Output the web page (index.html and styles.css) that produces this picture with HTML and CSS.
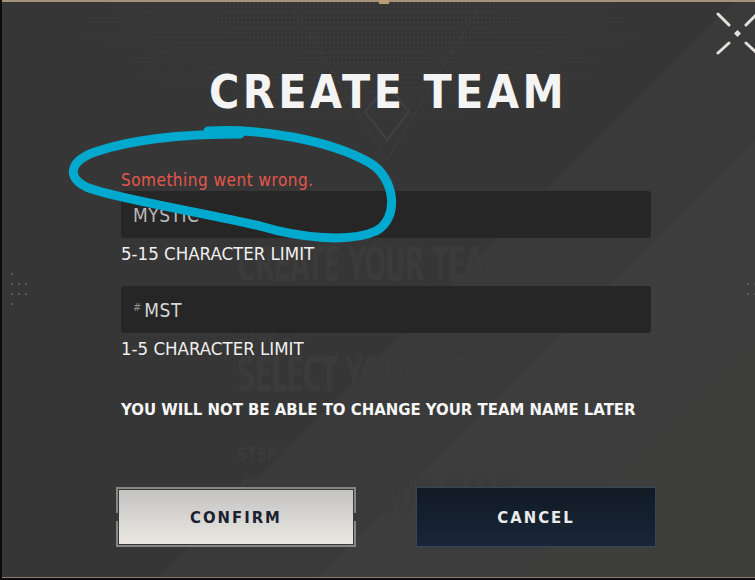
FILE: index.html
```html
<!DOCTYPE html>
<html lang="en">
<head>
    <meta charset="UTF-8">
    <title>Create Team</title>
    <link rel="stylesheet" href="styles.css">
</head>
<body>
    <div class="modal">
        <div class="sheen"></div>
        <div class="texture"></div>

        <div class="ghost">
            <div class="ghost-title g1">CREATE YOUR TEAM</div>
            <div class="ghost-step g2">STEP 2</div>
            <div class="ghost-title g3">SELECT YOUR ZONE</div>
            <div class="ghost-step g4">STEP 3</div>
            <div class="ghost-title g5">CHOOSE YOUR GAME</div>
        </div>

        <svg class="deco" width="755" height="200" viewBox="0 0 755 200">
            <path d="M286 0 L385 160 L481 0" fill="none" stroke="#3f3f3f" stroke-width="1"/>
            <path d="M385 84 L407 112 L385 140 L363 112 Z" fill="none" stroke="#444140" stroke-width="2"/>
        </svg>

        <div class="dots dots-left">
            <span></span><span class="off"></span><span class="off"></span>
            <span></span><span></span><span></span>
            <span></span><span></span><span></span>
            <span></span><span class="off"></span><span class="off"></span>
        </div>
        <div class="dots dots-right">
            <span></span><span></span>
            <span></span><span></span>
        </div>

        <div class="top-line"><span class="notch"></span></div>

        <button class="close" aria-label="Close">
            <svg width="46" height="50" viewBox="0 0 46 50">
                <path d="M6 5 L17 16 M34 16 L45 5 M6 44 L17 34 M34 34 L45 44" stroke="#e4e0da" stroke-width="3" stroke-linecap="round"/>
                <path d="M25.5 21 L29 24.5 L25.5 28 L22 24.5 Z" fill="#e4e0da"/>
            </svg>
        </button>

        <div class="content">
            <h1 class="title">CREATE TEAM</h1>

            <div class="error">Something went wrong.</div>
            <div class="field">
                <span class="value">MYSTIC</span>
            </div>
            <div class="hint">5-15 CHARACTER LIMIT</div>

            <div class="field field-tag">
                <span class="hash">#</span><span class="value">MST</span>
            </div>
            <div class="hint">1-5 CHARACTER LIMIT</div>

            <div class="warning">YOU WILL NOT BE ABLE TO CHANGE YOUR TEAM NAME LATER</div>

            <div class="actions">
                <div class="confirm-frame">
                    <button class="button confirm">CONFIRM</button>
                </div>
                <button class="button cancel">CANCEL</button>
            </div>
        </div>

        <svg class="scribble" width="755" height="580" viewBox="0 0 755 580">
            <path d="M208 131 C260 128 330 140 370 163 C395 178 400 218 376 231 C350 243 300 238 260 226 C200 212 130 201 95 190 C66 182 66 162 95 152 C130 140 180 134 240 134"
                  fill="none" stroke="#00a9cd" stroke-width="9" stroke-linecap="round" stroke-linejoin="round"/>
        </svg>

        <div class="bottom-line"></div>
    </div>
</body>
</html>
```

FILE: styles.css
```css
body {
    margin: 0;
    background-color: #000;
    font-family: "DejaVu Sans Condensed", "Liberation Sans Narrow", "Liberation Sans", sans-serif;
}
.modal {
    position: relative;
    width: 755px;
    height: 580px;
    background-color: #383838;
    overflow: hidden;
    border-left: 2px solid #0c0c0c;
    box-sizing: border-box;
}
.sheen {
    position: absolute;
    top: 0;
    right: 0;
    bottom: 0;
    left: 0;
    background: linear-gradient(135deg,
        rgba(0, 0, 0, 0.03) 0 55%,
        rgba(255, 255, 255, 0.012) 55% 67%,
        rgba(255, 255, 255, 0.028) 67% 82%,
        rgba(255, 240, 220, 0.032) 82%);
}
.texture {
    position: absolute;
    left: 30px;
    top: 0;
    width: 660px;
    height: 140px;
    background-image: radial-gradient(circle, #3f3f3f 0.8px, transparent 1.2px);
    background-size: 4px 5px;
    -webkit-mask-image: radial-gradient(ellipse 50% 100% at 50% 0, #000 40%, transparent);
    mask-image: radial-gradient(ellipse 50% 100% at 50% 0, #000 40%, transparent);
}
.deco {
    position: absolute;
    left: 0;
    top: 0;
}

/* faint copy of the page behind the dialog */
.ghost {
    position: absolute;
    left: 235px;
    top: 240px;
    display: flex;
    flex-direction: column;
    align-items: flex-start;
    color: #3b3b3b;
    font-weight: bold;
    line-height: 1;
}
.ghost-title {
    font-size: 48px;
    letter-spacing: -2px;
    transform: scaleX(0.6);
    transform-origin: left;
    white-space: nowrap;
}
.ghost-step {
    font-size: 20px;
    transform: scaleX(0.8);
    transform-origin: left;
}
.g1 { margin-bottom: 36px; }
.g2 { margin-bottom: 6px; }
.g3 { margin-bottom: 46px; }
.g4 { margin-bottom: 8px; }

.dots {
    position: absolute;
    display: grid;
    gap: 8px 5px;
}
.dots span {
    width: 2px;
    height: 2px;
    background-color: #5a5a5a;
}
.dots span.off {
    background: none;
}
.dots-left {
    left: 9px;
    top: 273px;
    grid-template-columns: repeat(3, 2px);
}
.dots-right {
    left: 745px;
    top: 283px;
    grid-template-columns: repeat(2, 2px);
}

.top-line {
    position: absolute;
    left: 0;
    top: 0;
    width: 100%;
    height: 2px;
    background-color: #a4927a;
}
.notch {
    position: absolute;
    left: 377px;
    top: 0;
    width: 10px;
    height: 4px;
    background-color: #b89e78;
}
.bottom-line {
    position: absolute;
    left: 0;
    top: 577px;
    width: 100%;
    height: 1px;
    background-color: #8a7c68;
    border-bottom: 2px solid #0c0c0c;
}

.close {
    position: absolute;
    left: 710px;
    top: 9px;
    padding: 0;
    border: none;
    background: none;
}
.close svg {
    display: block;
}

.content {
    position: relative;
    padding: 64px 0 0 119px;
    width: 530px;
}
.title {
    margin: 0 0 0 88px;
    color: #f4f4f4;
    font-size: 46px;
    line-height: 56px;
    font-weight: bold;
    letter-spacing: 3.5px;
}
.error {
    margin-top: 50px;
    color: #e5574b;
    font-size: 17px;
    line-height: 21px;
    letter-spacing: 0.5px;
}
.field {
    display: flex;
    align-items: center;
    height: 47px;
    padding: 0 12px;
    background-color: #262626;
    border-radius: 3px;
}
.value {
    color: #b9b9b9;
    font-size: 19px;
    letter-spacing: 0.5px;
}
.field-tag {
    margin-top: 21px;
}
.hash {
    color: #8d8d8d;
    font-size: 11px;
    margin-right: 3px;
    margin-top: -4px;
}
.field-tag .value {
    color: #d6d6d6;
}
.hint {
    margin-top: 5px;
    color: #f0f0f0;
    font-size: 18.5px;
    line-height: 22px;
}
.warning {
    margin-top: 40px;
    color: #f6f6f6;
    font-size: 16.6px;
    line-height: 20px;
    font-weight: bold;
}
.actions {
    display: flex;
    align-items: center;
    justify-content: space-between;
    margin-top: 67px;
    width: 540px;
    margin-left: -5px;
}
.confirm-frame {
    position: relative;
    padding: 1px;
    border: 2px solid #868684;
}
.confirm-frame::before {
    content: "";
    position: absolute;
    left: -2px;
    right: -2px;
    top: 24px;
    height: 8px;
    border-left: 2px solid #383838;
    border-right: 2px solid #383838;
}
.button {
    display: block;
    box-sizing: border-box;
    font-family: inherit;
    font-size: 16.5px;
    font-weight: bold;
    letter-spacing: 2px;
    cursor: pointer;
}
.confirm {
    width: 234px;
    height: 54px;
    border: none;
    color: #1b2130;
    background: linear-gradient(to bottom, #c3c3c3, #ebe8e1);
}
.cancel {
    width: 240px;
    height: 60px;
    border: 1px solid #34465b;
    color: #ebebeb;
    background: linear-gradient(to bottom, #111a24, #192639);
}
.scribble {
    position: absolute;
    left: -2px;
    top: 0;
    pointer-events: none;
}
```
